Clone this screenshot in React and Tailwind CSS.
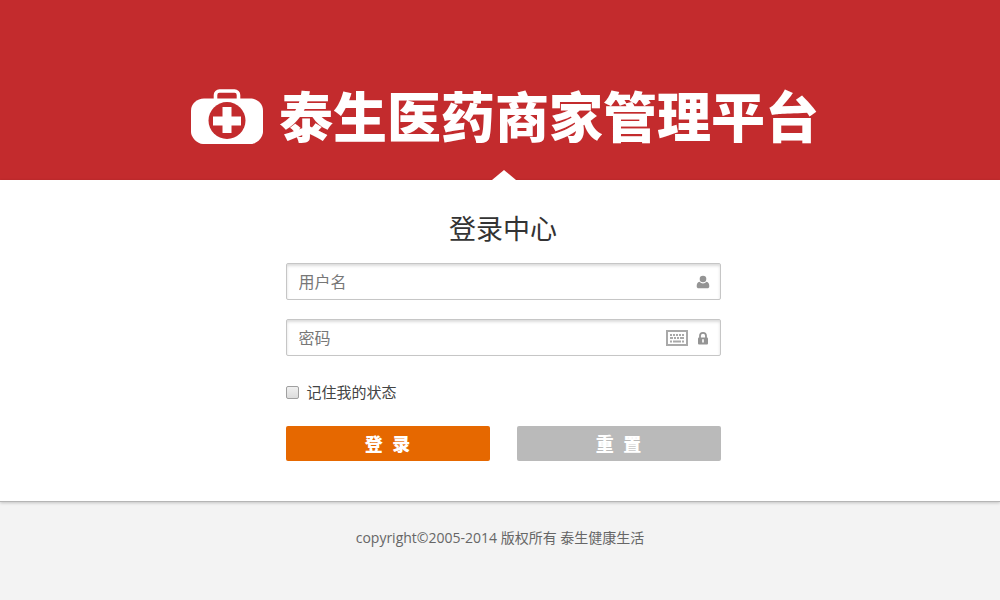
import { useState } from "react";

function MedicalBag() {
  return (
    <svg width="72" height="56" viewBox="0 0 72 56" aria-hidden="true" className="shrink-0">
      <path d="M24.500 11V6a4 4 0 0 1 4-4h15a4 4 0 0 1 4 4v5" fill="none" stroke="#fff" strokeWidth="3.6" />
      <path
        d="M13 9.500h46c7 0 13 5 13 12V43c0 5-6 12-12 12H12C6 55 0 48 0 43V21.500c0-7 6-12 13-12z"
        fill="#fff"
      />
      <circle cx="36" cy="31.500" r="18.500" fill="#c32b2d" />
      <path d="M31.500 18h9v9.500H50v9h-9.500V44h-9v-7.500H22v-9h9.500z" fill="#fff" />
    </svg>
  );
}

function UserIcon() {
  return (
    <svg width="14" height="14" viewBox="0 0 14 14" aria-hidden="true">
      <circle cx="7" cy="4" r="3.3" fill="#949494" />
      <path d="M3.500 6.800a4.600 4.600 0 0 0 7 0c2 .4 2.800 2.200 2.800 4.400 0 1.300-.8 2.100-2 2.100H2.700c-1.200 0-2-.8-2-2.100 0-2.200.8-4 2.800-4.400z" fill="#949494" />
    </svg>
  );
}

function LockIcon() {
  return (
    <svg width="14" height="14" viewBox="0 0 14 14" aria-hidden="true">
      <path d="M4 7V4.800a3 3 0 0 1 6 0V7" fill="none" stroke="#949494" strokeWidth="1.8" />
      <rect x="2" y="6.500" width="10" height="7" rx="1" fill="#949494" />
      <path d="M7 8.300v3.200" stroke="#fff" strokeWidth="1.6" />
    </svg>
  );
}

function KeyboardIcon() {
  return (
    <svg width="22" height="16" viewBox="0 0 22 16" aria-hidden="true">
      <rect x="1" y="1" width="20" height="14" fill="#fff" stroke="#a9a9a9" strokeWidth="2" />
      <path
        d="M4 5h2M7 5h2M10 5h2M13 5h2M16 5h2M4 8h3M8 8h2M11 8h2M14 8h4M4 11.500h2M7 11.500h8M16 11.500h2"
        stroke="#a9a9a9"
        strokeWidth="2"
      />
    </svg>
  );
}

function Field({ label, type, value, onChange, children }) {
  return (
    <label className="flex items-center h-[37px] pl-3 pr-2.5 bg-white border border-[#c6c6c6] rounded-xs shadow-[inset_0_2px_3px_rgba(0,0,0,0.14)]">
      <input
        type={type}
        value={value}
        placeholder={label}
        aria-label={label}
        onChange={(e) => onChange(e.target.value)}
        className="flex-1 min-w-0 bg-transparent outline-none text-base text-[#444] placeholder:text-[#777]"
      />
      <span className="flex items-center gap-2">{children}</span>
    </label>
  );
}

export default function App() {
  const [username, setUsername] = useState("");
  const [password, setPassword] = useState("");
  const [remember, setRemember] = useState(false);

  const handleReset = () => {
    setUsername("");
    setPassword("");
    setRemember(false);
  };

  return (
    <div className="min-h-screen bg-[#f3f3f3] font-['Open_Sans','Noto_Sans_CJK_SC',sans-serif]">
      <header className="flex flex-col items-center bg-[#c32b2d]">
        <div className="flex items-center gap-4 pt-20 pb-4 pl-2.5">
          <MedicalBag />
          <h1 className="text-[54px] leading-[74px] font-black text-white whitespace-nowrap">泰生医药商家管理平台</h1>
        </div>
        <svg width="24" height="10" viewBox="0 0 24 10" aria-hidden="true" className="ml-2">
          <path d="M0 10L12 0l12 10z" fill="#fff" />
        </svg>
      </header>

      <main className="bg-white pt-7 pb-10 pl-1.5 border-b border-[#b5b5b5] shadow-[0_1px_3px_rgba(0,0,0,0.2)]">
        <form onSubmit={(e) => e.preventDefault()} className="w-full max-w-[435px] mx-auto">
          <h2 className="text-[27px] leading-[42px] text-center text-[#333] mb-[13px]">登录中心</h2>
          <div className="flex flex-col gap-[19px]">
            <Field label="用户名" type="text" value={username} onChange={setUsername}>
              <UserIcon />
            </Field>
            <Field label="密码" type="password" value={password} onChange={setPassword}>
              <KeyboardIcon />
              <LockIcon />
            </Field>
          </div>
          <div className="flex items-center gap-2 mt-[25px] mb-[23px]">
            <input
              id="remember"
              type="checkbox"
              checked={remember}
              onChange={(e) => setRemember(e.target.checked)}
              className="appearance-none size-[13px] border border-[#a0a0a0] rounded-xs bg-linear-to-b from-[#f0f0f0] to-[#dcdcdc] checked:to-[#888]"
            />
            <label htmlFor="remember" className="text-[15px] leading-[22px] text-[#444]">记住我的状态</label>
          </div>
          <div className="grid grid-cols-2 gap-[27px]">
            <button type="submit" className="h-[35px] rounded-xs bg-[#e66800] text-lg leading-6 font-black text-white">
              登&nbsp;&nbsp;录
            </button>
            <button type="button" onClick={handleReset} className="h-[35px] rounded-xs bg-[#bababa] text-lg leading-6 font-black text-white">
              重&nbsp;&nbsp;置
            </button>
          </div>
        </form>
      </main>

      <footer className="py-6 text-center text-sm leading-6 text-[#666]">
        copyright©2005-2014 版权所有 泰生健康生活
      </footer>
    </div>
  );
}
